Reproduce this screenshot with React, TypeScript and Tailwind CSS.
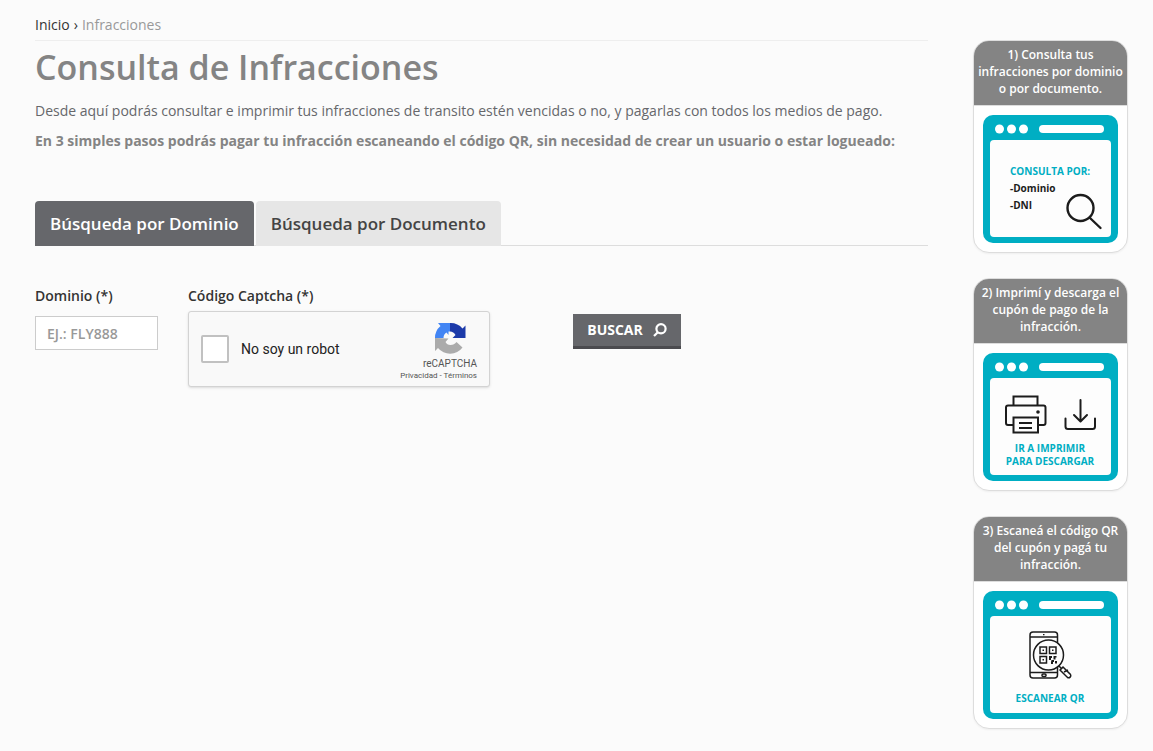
import { useState } from 'react';
import type { ReactNode } from 'react';

interface StepCardProps {
  title: string;
  children: ReactNode;
}

// Ventana de navegador que enmarca la ilustración de cada paso
const BrowserFrame = ({ children }: { children: ReactNode }) => (
  <svg viewBox="0 0 135 128" className="block w-full font-bold">
    <rect width="135" height="128" rx="10" fill="#00aec3" />
    <circle cx="16.5" cy="14" r="4.5" fill="#fff" />
    <circle cx="28.5" cy="14" r="4.5" fill="#fff" />
    <circle cx="40.5" cy="14" r="4.5" fill="#fff" />
    <rect x="56" y="10" width="65" height="8" rx="4" fill="#fff" />
    <rect x="7" y="25" width="121" height="97" rx="4" fill="#fdfdfd" />
    {children}
  </svg>
);

const StepCard = ({ title, children }: StepCardProps) => (
  <article className="overflow-hidden rounded-2xl border border-[#dddddd] bg-white shadow-xs">
    <h2 className="border-b border-[#dddddd] bg-[#848484] px-[2px] pt-[5px] pb-2 text-center text-xs leading-[17px] font-semibold text-white">
      {title}
    </h2>
    <div className="p-[9px]">
      <BrowserFrame>{children}</BrowserFrame>
    </div>
  </article>
);

const SearchDrawing = () => (
  <>
    <text x="27" y="60" fontSize="10" fill="#00aec3">CONSULTA POR:</text>
    <text x="27" y="77" fontSize="10" fill="#1c1c1c">-Dominio</text>
    <text x="27" y="94" fontSize="10" fill="#1c1c1c">-DNI</text>
    <g fill="none" stroke="#1c1c1c" strokeWidth="2.4" strokeLinecap="round">
      <circle cx="97.5" cy="93" r="13" />
      <path d="M107 103l10.500 10" />
    </g>
  </>
);

const PrintDrawing = () => (
  <>
    <g fill="none" stroke="#1c1c1c" strokeWidth="2">
      <path d="M30.500 52.500V43.500h24v9" />
      <path d="M30.500 72H25a2 2 0 0 1-2-2V54.500a2 2 0 0 1 2-2h35.500a2 2 0 0 1 2 2V70a2 2 0 0 1-2 2h-6" />
      <rect x="30.500" y="64.500" width="24.500" height="15" />
      <path d="M36 70h13M36 75h13" />
    </g>
    <circle cx="55" cy="59" r="1.800" fill="#1c1c1c" />
    <g fill="none" stroke="#1c1c1c" strokeWidth="2" strokeLinecap="round" strokeLinejoin="round">
      <path d="M97.500 47v21M91 62l6.500 6.500 6.500-6.500" />
      <path d="M82.500 65.500v8a2.500 2.500 0 0 0 2.500 2.500h24.500a2.500 2.500 0 0 0 2.500-2.500v-8" />
    </g>
    <text x="67" y="99" fontSize="10" fill="#00aec3" textAnchor="middle">IR A IMPRIMIR</text>
    <text x="67" y="112" fontSize="10" fill="#00aec3" textAnchor="middle">PARA DESCARGAR</text>
  </>
);

const QrDrawing = () => (
  <>
    <g fill="none" stroke="#1c1c1c" strokeWidth="1.500">
      <rect x="47" y="41" width="27.500" height="46" rx="3" />
      <path d="M47 46h27.500M47 81.500h27.500" />
      <rect x="59" y="83" width="4" height="2.500" rx="1" />
      <circle cx="65.500" cy="64" r="15" fill="#fdfdfd" />
      <path d="M57 56h6.500v6.500H57zM66.500 56H73v6.500h-6.500zM57 65.500h6.500V72H57z" />
      <path d="M76 75l3 3" />
      <path d="M77 79l3-3 7.500 7.500a2.200 2.200 0 0 1-3 3z" />
      <path d="M81 81l4-2" />
    </g>
    <path
      d="M59.500 58.500h1.500v1.500h-1.500zM69 58.500h1.500v1.500H69zM59.500 68h1.500v1.500h-1.500zM66 65h3v2h-1v2h-2zM70.500 65h3v1.500h-1v2h-2zM68.500 69h2.500v2h-1v2h-2v-2zM72 70h2v2.500h-2zM60 43h1.500v1.200H60z"
      fill="#1c1c1c"
    />
    <text x="67" y="111" fontSize="10" fill="#00aec3" textAnchor="middle">ESCANEAR QR</text>
  </>
);

const RecaptchaLogo = () => (
  <svg viewBox="0 0 64 64" className="h-8 w-8" aria-hidden="true">
    <path d="M63 32V7l-6 6A31 31 0 0 0 32 2v17a14 14 0 0 1 11 7l-6 6z" fill="#1c3aa9" />
    <path d="M32 2H8l5 6A31 31 0 0 0 2 32h17c0-5 2-9 6-11l4 5v-7h3z" fill="#4285f4" />
    <path d="M2 32v26l6-6a31 31 0 0 0 49-1L45 40a15 15 0 0 1-12 6c-5 0-8-2-10-6l6-7z" fill="#ababab" />
  </svg>
);

const Captcha = () => (
  <div className="flex h-[76px] w-[302px] items-center rounded-[3px] border border-[#d3d3d3] bg-[#f9f9f9] px-3 font-['Roboto',sans-serif] font-normal shadow-sm">
    <input
      id="captcha"
      type="checkbox"
      className="h-7 w-7 appearance-none rounded-xs border-2 border-[#c1c1c1] bg-white"
    />
    <label htmlFor="captcha" className="ml-3 flex-1 text-sm text-[#222222]">
      No soy un robot
    </label>
    <div className="flex flex-col items-end pt-[6px] text-[#555555]">
      <div className="flex flex-col items-center">
        <RecaptchaLogo />
        <span className="mt-1 text-[10px] leading-3">reCAPTCHA</span>
      </div>
      <span className="text-[8px] leading-3">
        <a href="#privacidad">Privacidad</a> - <a href="#terminos">Términos</a>
      </span>
    </div>
  </div>
);

const tabs = ['Búsqueda por Dominio', 'Búsqueda por Documento'];

const App = () => {
  const [activeTab, setActiveTab] = useState(0);
  const [dominio, setDominio] = useState('');

  return (
    <div className="flex min-h-screen items-start gap-[45px] bg-[#fbfbfb] pr-[25px] pl-[35px] font-['Open_Sans',sans-serif] font-medium">
      <main className="min-w-0 flex-1">
        {/* Ruta de navegación */}
        <nav className="flex gap-1 border-b border-[#eeeeee] pt-[15px] pb-[5px] text-[14px] leading-5">
          <a href="#inicio" className="text-[#333333]">Inicio</a>
          <span className="text-[#333333]">›</span>
          <span className="text-[#999999]">Infracciones</span>
        </nav>

        <h1 className="mt-1 text-[34px] leading-11 font-semibold text-[#848484]">Consulta de Infracciones</h1>
        <p className="mt-3 text-[14px] leading-5 text-[#66676b]">
          Desde aquí podrás consultar e imprimir tus infracciones de transito estén vencidas o no, y pagarlas con todos los medios de pago.
        </p>
        <p className="mt-[10px] text-[14px] leading-5 font-bold text-[#848484]">
          En 3 simples pasos podrás pagar tu infracción escaneando el código QR, sin necesidad de crear un usuario o estar logueado:
        </p>

        {/* Tipo de búsqueda */}
        <div role="tablist" className="mt-[50px] flex gap-[2px] border-b border-[#dddddd] text-[17px] font-semibold">
          {tabs.map((tab, index) => (
            <button
              key={tab}
              type="button"
              role="tab"
              aria-selected={activeTab === index}
              onClick={() => setActiveTab(index)}
              className={`-mb-px h-[45px] rounded-t px-[15px] ${
                activeTab === index ? 'bg-[#66676b] text-white' : 'bg-[#e6e6e6] text-[#444444]'
              }`}
            >
              {tab}
            </button>
          ))}
        </div>

        <form className="mt-10 flex items-start text-[14px] leading-5 font-semibold text-[#333333]" onSubmit={(e) => e.preventDefault()}>
          <div className="mr-[30px] w-[123px]">
            <label htmlFor="dominio" className="block">Dominio (*)</label>
            <input
              id="dominio"
              value={dominio}
              onChange={(e) => setDominio(e.target.value)}
              placeholder="EJ.: FLY888"
              className="mt-[10px] h-[34px] w-full border border-[#cccccc] bg-white px-[11px] placeholder:text-[#999999]"
            />
          </div>
          <div className="mr-[83px]">
            <label htmlFor="captcha" className="mb-[5px] block">Código Captcha (*)</label>
            <Captcha />
          </div>
          <button
            type="submit"
            className="mt-7 flex h-[35px] w-[108px] items-center justify-center gap-[10px] border-b-3 border-[#4b4b4f] bg-[#66676b] font-bold text-white"
          >
            BUSCAR
            <svg viewBox="0 0 14 14" className="h-[14px] w-[14px]" fill="none" stroke="currentColor" strokeWidth="2.200" aria-hidden="true">
              <circle cx="8" cy="5.800" r="4.600" />
              <path d="M4.800 9.200L1 13" />
            </svg>
          </button>
        </form>
      </main>

      {/* Pasos para pagar */}
      <aside className="flex w-[155px] shrink-0 flex-col gap-[25px] pt-10">
        <StepCard title="1) Consulta tus infracciones por dominio o por documento.">
          <SearchDrawing />
        </StepCard>
        <StepCard title="2) Imprimí y descarga el cupón de pago de la infracción.">
          <PrintDrawing />
        </StepCard>
        <StepCard title="3) Escaneá el código QR del cupón y pagá tu infracción.">
          <QrDrawing />
        </StepCard>
      </aside>
    </div>
  );
};

export default App;
